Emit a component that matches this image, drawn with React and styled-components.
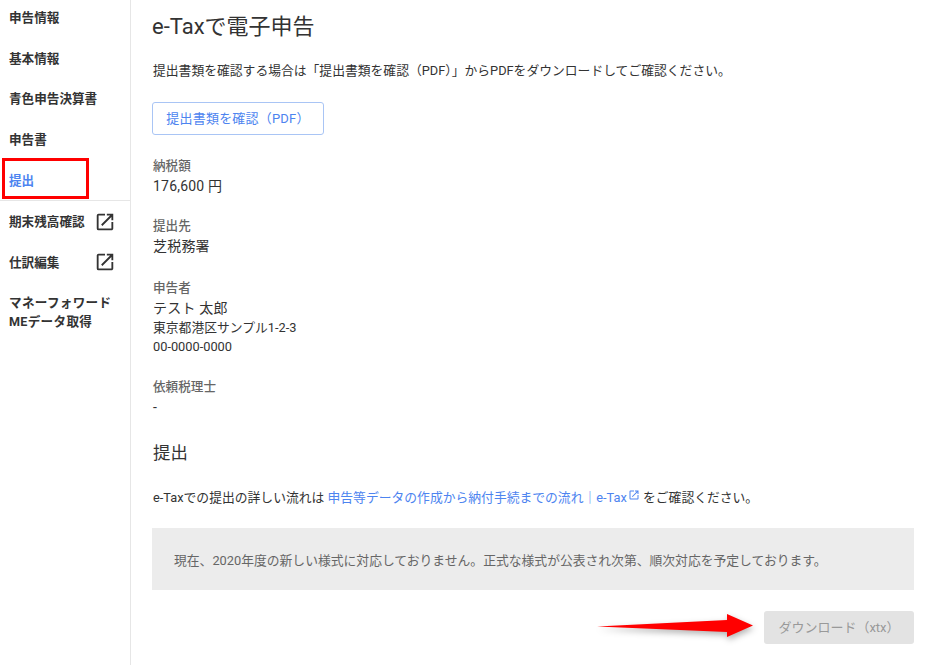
import React from 'react'
import styled, { createGlobalStyle } from 'styled-components'
import { MdOpenInNew } from 'react-icons/md'

const Global = createGlobalStyle`
  html, body {
    margin: 0;
    padding: 0;
    background: #fff;
  }
  body {
    font-family: Roboto, 'Noto Sans CJK JP', sans-serif;
    font-size: 12.8px;
    color: #333;
  }
`

const Page = styled.div`
  position: relative;
  display: flex;
  width: 939px;
  height: 665px;
  overflow: hidden;
`

const Sidebar = styled.nav`
  width: 130px;
  flex: none;
  border-right: 1px solid #e6e6e6;
`

const NavGroup = styled.ul`
  list-style: none;
  margin: 0;
  padding: 0;

  &:first-child {
    margin-top: -3px;
    border-bottom: 1px solid #e6e6e6;
  }
`

const NavItem = styled.li`
  display: flex;
  align-items: center;
  justify-content: space-between;
  min-height: 40.7px;
  padding: 0 17px 0 9px;
  font-size: 12.6px;
  line-height: 19px;
  font-weight: 700;
  color: ${p => (p.$active ? '#4d84f0' : '#333')};

  svg {
    flex: none;
    margin-right: -3px;
  }
`

const TallItem = styled(NavItem)`
  padding-top: 9px;
  padding-bottom: 9px;
  letter-spacing: 0.3px;
`

const Main = styled.main`
  flex: 1;
  padding: 0 25px 21px 21px;
  min-width: 0;
`

const Title = styled.h1`
  margin: 13px 0 0;
  font-size: 22px;
  line-height: 28px;
  font-weight: 400;
`

const Text = styled.p`
  margin: ${p => p.$gap || 20}px 0 0 1px;
  line-height: 20px;
  color: #333;
`

const OutlineButton = styled.button`
  display: block;
  width: 172px;
  height: 33px;
  margin: 21px 0 0;
  padding: 0 0 2px;
  border: 1px solid #a9c5f5;
  border-radius: 3px;
  background: #fff;
  color: #4d84f0;
  font: inherit;
  font-size: 13px;
  letter-spacing: 0.2px;
`

const Field = styled.div`
  margin: ${p => p.$gap || 20}px 0 0 1px;
`

const Label = styled.div`
  font-size: 12.6px;
  line-height: 20px;
  color: #666;
  font-weight: 500;
`

const Value = styled.div`
  margin-top: 1px;
  line-height: ${p => (p.$tight ? '18.5px' : '19.5px')};
  font-size: 14px;
  letter-spacing: 0.2px;
`

const SubValue = styled.div`
  line-height: 19px;
`

const Heading = styled.h2`
  margin: 23px 0 0 1px;
  font-size: 17.4px;
  line-height: 26px;
  font-weight: 400;
`

const InlineLink = styled.a`
  color: #4d84f0;
  text-decoration: none;

  svg {
    vertical-align: 1px;
    margin-left: 1px;
  }
`

const Notice = styled.div`
  margin-top: 20px;
  height: 62px;
  padding: 0 22px;
  display: flex;
  align-items: center;
  background: #ececec;
  color: #666;
`

const Actions = styled.div`
  display: flex;
  justify-content: flex-end;
  margin-top: 21px;
`

const DisabledButton = styled.button`
  width: 150px;
  height: 33px;
  padding: 0 0 3px;
  border: none;
  border-radius: 3px;
  background: #e3e3e3;
  color: #999;
  font: inherit;
  font-size: 13px;
`

const Highlight = styled.div`
  position: absolute;
  left: 2px;
  top: 158px;
  width: 81px;
  height: 35px;
  border: 3px solid #f00;
`

const Arrow = styled.svg`
  position: absolute;
  left: 590px;
  top: 606px;
  filter: drop-shadow(1px 3px 3px rgba(0, 0, 0, 0.3));
`

export default function App() {
  return (
    <Page>
      <Global />
      <Sidebar>
        <NavGroup>
          <NavItem>申告情報</NavItem>
          <NavItem>基本情報</NavItem>
          <NavItem>青色申告決算書</NavItem>
          <NavItem>申告書</NavItem>
          <NavItem $active>提出</NavItem>
        </NavGroup>
        <NavGroup>
          <NavItem>期末残高確認<MdOpenInNew size={22} color="#333" /></NavItem>
          <NavItem>仕訳編集<MdOpenInNew size={22} color="#333" /></NavItem>
          <TallItem>マネーフォワード<br />MEデータ取得</TallItem>
        </NavGroup>
      </Sidebar>
      <Main>
        <Title>e-Taxで電子申告</Title>
        <Text>提出書類を確認する場合は「提出書類を確認（PDF）」からPDFをダウンロードしてご確認ください。</Text>
        <OutlineButton>提出書類を確認（PDF）</OutlineButton>
        <Field $gap={21}>
          <Label>納税額</Label>
          <Value>176,600 円</Value>
        </Field>
        <Field $gap={19}>
          <Label>提出先</Label>
          <Value>芝税務署</Value>
        </Field>
        <Field $gap={22}>
          <Label>申告者</Label>
          <Value $tight>テスト 太郎</Value>
          <SubValue>東京都港区サンプル1-2-3</SubValue>
          <SubValue>00-0000-0000</SubValue>
        </Field>
        <Field $gap={21}>
          <Label>依頼税理士</Label>
          <Value>-</Value>
        </Field>
        <Heading>提出</Heading>
        <Text $gap={22}>
          e-Taxでの提出の詳しい流れは <InlineLink href="#">申告等データの作成から納付手続までの流れ｜e-Tax<MdOpenInNew size={12} /></InlineLink> をご確認ください。
        </Text>
        <Notice>現在、2020年度の新しい様式に対応しておりません。正式な様式が公表され次第、順次対応を予定しております。</Notice>
        <Actions>
          <DisabledButton disabled>ダウンロード（xtx）</DisabledButton>
        </Actions>
      </Main>
      <Highlight />
      <Arrow width="175" height="45" viewBox="0 0 175 45">
        <polygon points="7,20.5 137,14 137,8 163,19.5 137,31 137,26" fill="#f00" />
      </Arrow>
    </Page>
  )
}
